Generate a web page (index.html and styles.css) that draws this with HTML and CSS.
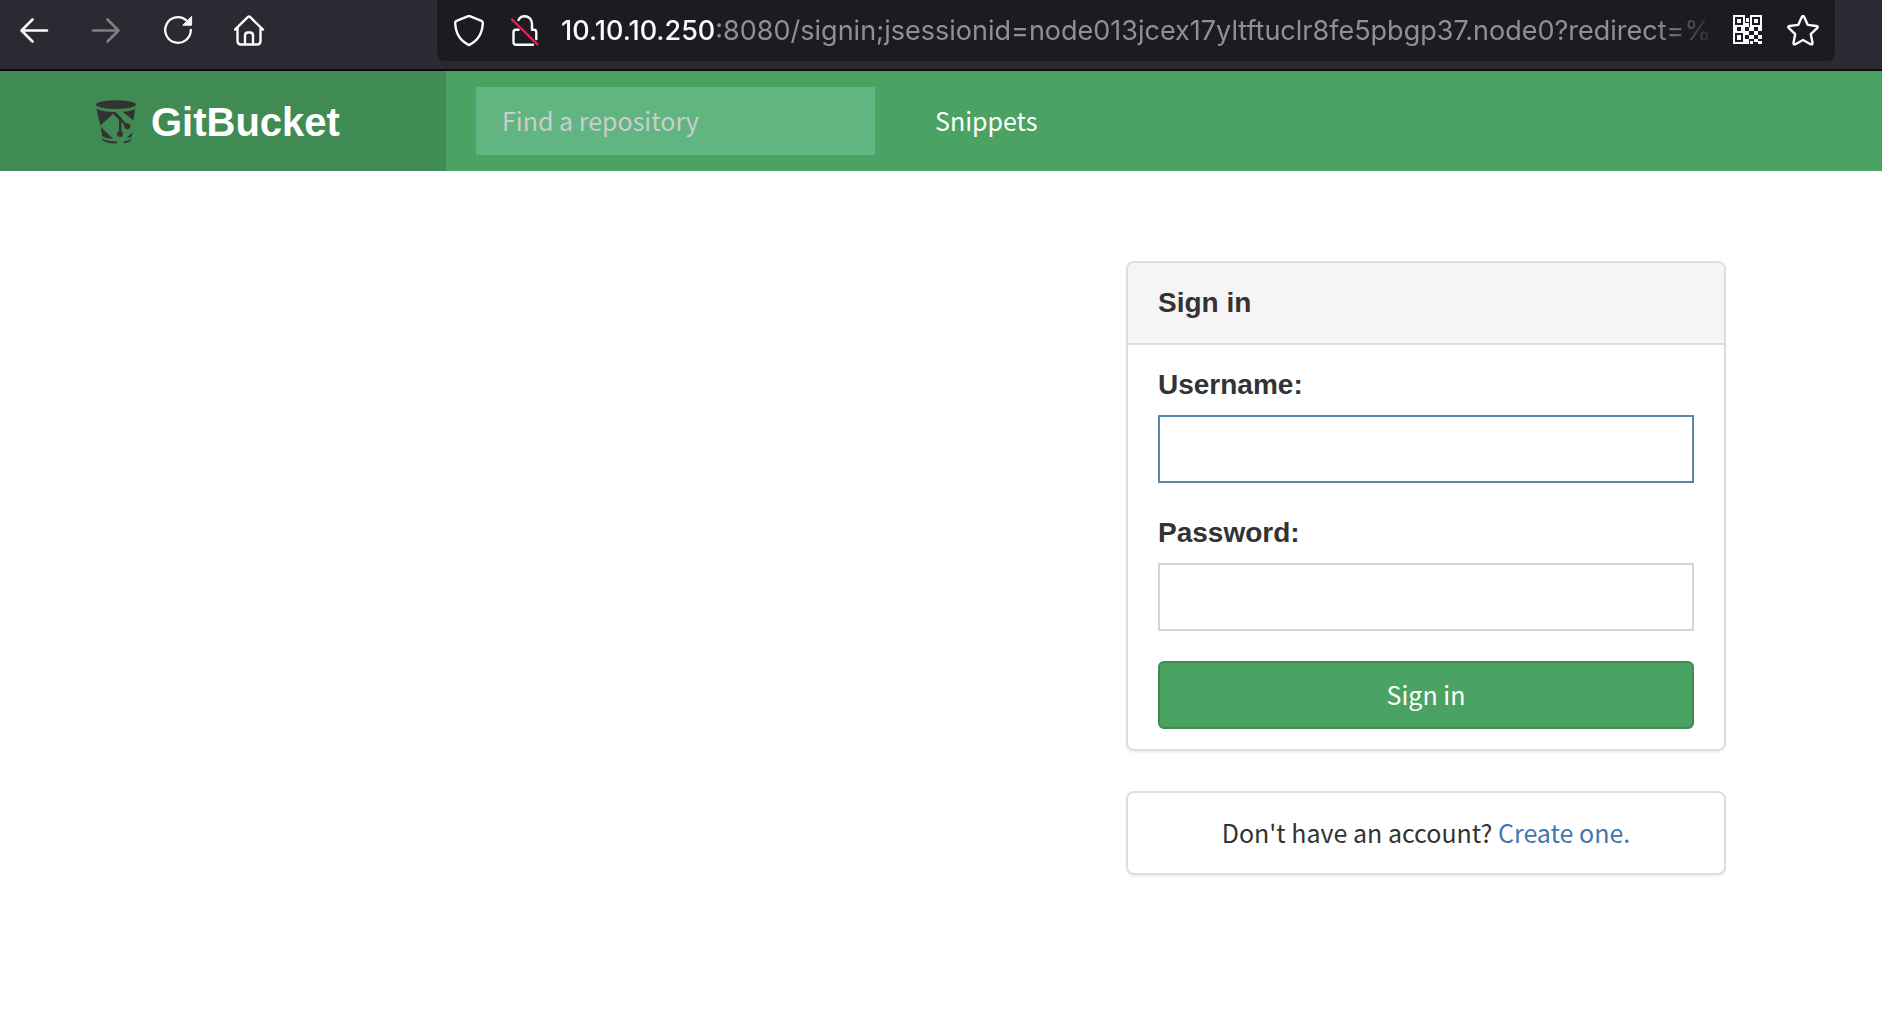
FILE: index.html
```html
<!DOCTYPE html>
<html lang="en">
<head>
  <meta charset="utf-8">
  <title>GitBucket</title>
  <link rel="stylesheet" href="styles.css">
</head>
<body>
  <div class="toolbar">
    <div class="nav-buttons">
      <button class="icon-button" type="button" aria-label="Back">
        <svg viewBox="0 0 32 32" fill="none" stroke="currentColor" stroke-width="2.6" stroke-linecap="round" stroke-linejoin="round"><path d="M29 15.500H3.500M14.500 4.500 3.500 15.500l11 11"/></svg>
      </button>
      <button class="icon-button" type="button" aria-label="Forward" disabled>
        <svg viewBox="0 0 32 32" fill="none" stroke="currentColor" stroke-width="2.6" stroke-linecap="round" stroke-linejoin="round"><path d="M3 15.500h25.500M17.500 4.500l11 11-11 11"/></svg>
      </button>
      <button class="icon-button" type="button" aria-label="Reload">
        <svg viewBox="0 0 32 32" fill="none" stroke="currentColor" stroke-width="2.300" stroke-linecap="round" stroke-linejoin="round"><path d="M28.800 15a12.800 12.800 0 1 1-4.500-9.750"/><path d="M29.600 1.800v8.400h-8.400z" fill="currentColor" stroke-width="1"/></svg>
      </button>
      <button class="icon-button" type="button" aria-label="Home">
        <svg viewBox="0 0 32 32" fill="none" stroke="currentColor" stroke-width="2.400" stroke-linecap="round" stroke-linejoin="round"><path d="M1 14.700 14 1.900q1-1 2 0L29 14.700M3.500 12.500V26q0 3.500 3.500 3.500h16q3.500 0 3.500-3.500V12.500M11 29V20.500q0-3 3-3h2q3 0 3 3V29"/></svg>
      </button>
    </div>
    <div class="address-bar">
      <div class="site-icons">
        <svg class="icon" viewBox="0 0 32 32" fill="none" stroke="currentColor" stroke-width="2.400" stroke-linejoin="round"><path d="M16 .8 28.500 5.800q1.300.5 1.300 2C29.500 18.300 24 26.300 16 30.100 8 26.300 2.500 18.300 2.200 7.800q0-1.500 1.300-2z"/></svg>
        <svg class="icon" viewBox="0 0 32 32" fill="none" stroke="currentColor" stroke-width="2.400" stroke-linecap="round" stroke-linejoin="round"><path d="M9.500 5C10.800 2.500 12.800 1.200 15.500 1.200c4.300 0 7.500 3.200 7.500 7.500v6h1.800q2.500 0 2.500 2.500V24M9.500 14.700H7q-2.500 0-2.500 2.500v10q0 2.500 2.500 2.500h17"/><path class="slash" d="m3 4.500 25.500 25"/></svg>
      </div>
      <div class="url"><span class="host">10.10.10.250</span>:8080/signin;jsessionid=node013jcex17yltftuclr8fe5pbgp37.node0?redirect=%</div>
      <div class="page-actions">
        <button class="icon-button" type="button" aria-label="QR code">
          <svg viewBox="-2 0 32 32" fill="currentColor" shape-rendering="crispEdges"><path fill-rule="evenodd" d="M0 0h12v12H0zm2 2v8h8V2zM17 0h12v12H17zm2 2v8h8V2zM0 16h12v13H0zm2 2v9h8v-9zM4 4h4v4H4zM21 4h4v4h-4zM4 20h4v5H4z"/><path d="M13 3h3v4h-3zM12 8h4v4h-4zM0 12h4v4H0zM8 12h4v4H8zM16 12h5v4h-5zM25 12h4v4h-4zM12 16h4v4h-4zM21 16h4v4h-4zM16 20h5v4h-5zM25 20h4v4h-4zM12 24h4v5h-4zM21 24h4v3h-4zM17 26h3v3h-3zM25 26h4v3h-4z"/></svg>
        </button>
        <button class="icon-button" type="button" aria-label="Bookmark this page">
          <svg viewBox="0 0 32 32" fill="none" stroke="currentColor" stroke-width="2.400" stroke-linejoin="round"><path d="M14.800 2q1.200-2 2.400 0l3.600 7.900 8.600 1.100q2.200.5.700 2.200l-6.300 6 1.700 8.500q.2 2.300-1.900 1.500L16 25l-7.600 4.200q-2.100.8-1.900-1.500l1.700-8.500-6.300-6q-1.500-1.700.7-2.200l8.600-1.100z"/></svg>
        </button>
      </div>
    </div>
  </div>

  <header class="site-header">
    <a class="brand" href="#">
      <svg class="brand-logo" viewBox="0 0 40 44" fill="#333">
        <ellipse cx="20" cy="4.600" rx="20" ry="4.400"/>
        <path d="M.5 9q8 3.200 19 3l6.500 6.500-2 2-7-6.500L4.300 25.500z"/>
        <path d="M4.800 27 17 38.800Q9 38.500 6 36z"/>
        <path d="M26.500 11.800q8-.5 12.700-2.800L37.300 20.500z"/>
        <path d="M22 16.500 31 26.200M24.200 17.500v16" fill="none" stroke="#333" stroke-width="2.400"/>
        <circle cx="31.300" cy="26.200" r="3"/>
        <circle cx="24" cy="34" r="3"/>
        <path d="M5 38.500q6 3 16 3v2Q8.500 43.800 5 38.500zM28 41.200q5-.6 8-3-1.500 4.500-8 5zM31 37.500l5.500-5-.8 4q-1.700 1.500-4.700 1z"/>
      </svg>
      <span>GitBucket</span>
    </a>
    <nav class="site-nav">
      <input class="repo-search" type="text" placeholder="Find a repository" aria-label="Find a repository">
      <a class="nav-link" href="#">Snippets</a>
    </nav>
  </header>

  <main class="content">
    <section class="panel">
      <h1 class="panel-heading">Sign in</h1>
      <form class="signin-form">
        <div class="field">
          <label for="username">Username:</label>
          <input class="text-input active" id="username" type="text">
        </div>
        <div class="field">
          <label for="password">Password:</label>
          <input class="text-input" id="password" type="password">
        </div>
        <button class="submit" type="submit">Sign in</button>
      </form>
    </section>
    <section class="panel signup">
      <p>Don't have an account? <a href="#">Create one.</a></p>
    </section>
  </main>
</body>
</html>
```
FILE: styles.css
```css
* {
  box-sizing: border-box;
}

body {
  margin: 0;
  background: #fff;
  color: #333;
  font-family: "Noto Sans CJK SC", "Noto Sans", sans-serif;
  font-size: 25px;
  line-height: 40px;
}

button,
input {
  font: inherit;
}

/* Browser toolbar */
.toolbar {
  display: flex;
  padding: 0 47px 8px 18px;
  gap: 171px;
  background: #2b2a33;
  border-bottom: 2px solid #0c0c0d;
}

.nav-buttons {
  display: flex;
  align-items: center;
  gap: 40px;
}

.icon-button {
  flex: none;
  width: 32px;
  height: 32px;
  padding: 0;
  border: 0;
  background: none;
  color: #fbfbfe;
}

.icon-button:disabled {
  color: #807f86;
}

.icon-button svg,
.icon {
  display: block;
  width: 32px;
  height: 32px;
}

.address-bar {
  display: flex;
  flex: 1;
  align-items: center;
  min-width: 0;
  height: 61px;
  padding: 0 16px;
  background: #1c1b22;
  border-radius: 0 0 8px 8px;
  color: #fbfbfe;
}

.site-icons,
.page-actions {
  display: flex;
  gap: 24px;
}

.slash {
  stroke: #e22850;
}

.url {
  flex: 1;
  min-width: 0;
  margin: 0 12px 0 20px;
  overflow: hidden;
  color: #8f8f95;
  font-family: Inter, "Liberation Sans", sans-serif;
  font-size: 27px;
  white-space: nowrap;
  mask-image: linear-gradient(to left, transparent, #000 64px);
}

.host {
  color: #fbfbfe;
  font-weight: 500;
}

/* Site header */
.site-header {
  display: flex;
  height: 100px;
  background: #4aa362;
}

.brand {
  display: flex;
  flex: none;
  align-items: center;
  gap: 15px;
  width: 446px;
  padding: 2px 0 0 96px;
  background: #3f8b53;
  color: #fff;
  font: bold 40px/48px "Liberation Sans", Arial, sans-serif;
  text-decoration: none;
}

.brand-logo {
  width: 40px;
  height: 44px;
}

.site-nav {
  display: flex;
  align-items: center;
  gap: 60px;
  padding-left: 30px;
}

.repo-search {
  width: 399px;
  height: 68px;
  padding: 0 26px 2px;
  border: 0;
  background: #60b581;
  color: #fff;
}

.repo-search::placeholder {
  color: #ccc;
  opacity: 1;
}

.nav-link {
  padding-bottom: 2px;
  color: #fff;
  text-decoration: none;
}

/* Sign-in page */
.content {
  display: flex;
  flex-direction: column;
  align-items: flex-end;
  gap: 40px;
  padding: 90px 156px;
}

.panel {
  width: 600px;
  max-width: 100%;
  background: #fff;
  border: 2px solid #ddd;
  border-radius: 8px;
  box-shadow: 0 2px 2px rgba(0, 0, 0, 0.05);
}

.panel-heading,
.field label {
  font: bold 28px/40px "Liberation Sans", Arial, sans-serif;
}

.panel-heading {
  margin: 0;
  padding: 20px 30px;
  background: #f5f5f5;
  border-bottom: 2px solid #ddd;
  border-radius: 6px 6px 0 0;
}

.signin-form {
  display: flex;
  flex-direction: column;
  gap: 30px;
  padding: 20px 30px;
}

.field {
  display: flex;
  flex-direction: column;
  gap: 10px;
}

.text-input {
  width: 100%;
  height: 68px;
  padding: 0 24px;
  border: 2px solid #d2d6da;
  border-radius: 0;
  background: #fff;
  color: #333;
  outline: 0;
}

.text-input.active,
.text-input:focus {
  border-color: #5688ae;
}

.submit {
  height: 68px;
  padding: 0 24px 2px;
  border: 2px solid #3f8b53;
  border-radius: 6px;
  background: #4aa362;
  color: #fff;
}

.signup p {
  margin: 0;
  padding: 19px 30px 21px;
  text-align: center;
}

.signup a {
  color: #4078b0;
  text-decoration: none;
}
```
